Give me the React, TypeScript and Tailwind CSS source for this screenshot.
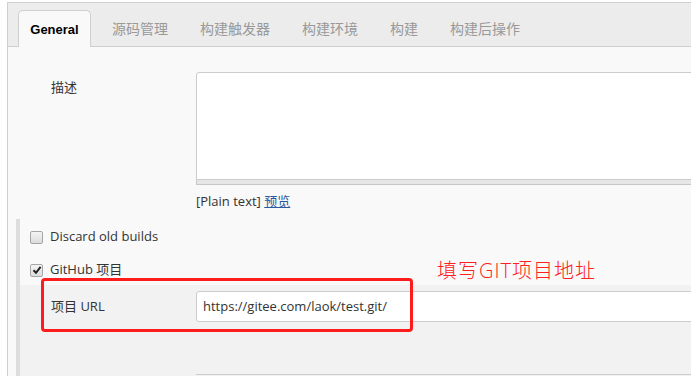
import React from 'react';

const tabs = ['源码管理', '构建触发器', '构建环境', '构建', '构建后操作'];

const font = "font-['Open_Sans','Noto_Sans_CJK_SC',sans-serif]";

const Checkbox = ({ checked }: { checked?: boolean }) => (
  <span className="relative flex h-[13px] w-[13px] shrink-0 items-center justify-center rounded-[2px] border border-[#a6a6a6] bg-gradient-to-b from-[#f4f4f4] to-[#dcdcdc]">
    {checked && (
      <svg width="10" height="10" viewBox="0 0 10 10">
        <path d="M1.5 5.2 L4 7.8 L8.6 1.8" fill="none" stroke="#222" strokeWidth="2" />
      </svg>
    )}
  </span>
);

export default function App() {
  return (
    <div className={`relative h-[376px] w-[691px] overflow-hidden bg-white text-[13px] text-[#333] ${font}`}>
      <div className="ml-[7px] mt-[2px] h-[374px] border-l border-t border-[#cfcfcf] bg-[#f9f9f9]">
        {/* Tabs */}
        <div className="flex h-[44px] items-end border-b border-[#cfcfcf] bg-[#ececec] pl-[10px]">
          <div className="-mb-px flex h-[37px] w-[73px] items-center justify-center rounded-t-[5px] border border-b-0 border-[#cfcfcf] bg-[#f9f9f9] pt-px font-['Liberation_Sans',sans-serif] text-[13px] font-bold text-black">
            General
          </div>
          <div className="ml-[5px] flex h-[36px] items-center">
            {tabs.map((t) => (
              <span key={t} className="px-[16px] text-[14px] text-[#999]">
                {t}
              </span>
            ))}
          </div>
        </div>

        {/* Description */}
        <div className="flex pt-[25px]">
          <div className="w-[188px] shrink-0 pl-[43px] pt-[6px]">描述</div>
          <div className="w-[520px] shrink-0">
            <div className="h-[108px] rounded-tl-[3px] border border-[#cccccc] bg-white" />
            <div className="h-[5px] border-x border-b border-[#c8c8c8] bg-[#e6e6e6]" />
            <div className="mt-[7px] leading-[18px]">
              [Plain text]{' '}
              <span className="text-[#2a5aa0] underline">预览</span>
            </div>
          </div>
        </div>

        {/* Options section */}
        <div className="ml-[8px] mt-[9px] border-l-[4px] border-[#dddddd]">
          <div className="flex h-[33px] items-center gap-[7px] pl-[10px] pt-[3px]">
            <Checkbox />
            <span>Discard old builds</span>
          </div>
          <div className="flex h-[33px] items-center gap-[7px] pl-[10px] pt-[3px]">
            <Checkbox checked />
            <span>GitHub 项目</span>
          </div>
          <div className="h-[100px] bg-[#f2f2f2] pt-[6px]">
            <div className="flex items-center">
              <div className="w-[176px] shrink-0 pl-[31px]">项目 URL</div>
              <div className="flex h-[31px] w-[520px] shrink-0 items-center rounded-[3px] border border-[#cccccc] bg-white pl-[6px]">
                https://gitee.com/laok/test.git/
              </div>
            </div>
            <div className="ml-[176px] mt-[52px] h-[10px] w-[520px] border-t border-[#cccccc]" />
          </div>
        </div>
      </div>

      {/* Annotation */}
      <div className="absolute left-[41px] top-[278px] h-[54px] w-[372px] rounded-[4px] border-[3px] border-[#ff1c1c]" />
      <div className="absolute left-[437px] top-[257px] text-[20px] font-light leading-[28px] tracking-[1px] text-[#ff2020]">
        填写GIT项目地址
      </div>
    </div>
  );
}
